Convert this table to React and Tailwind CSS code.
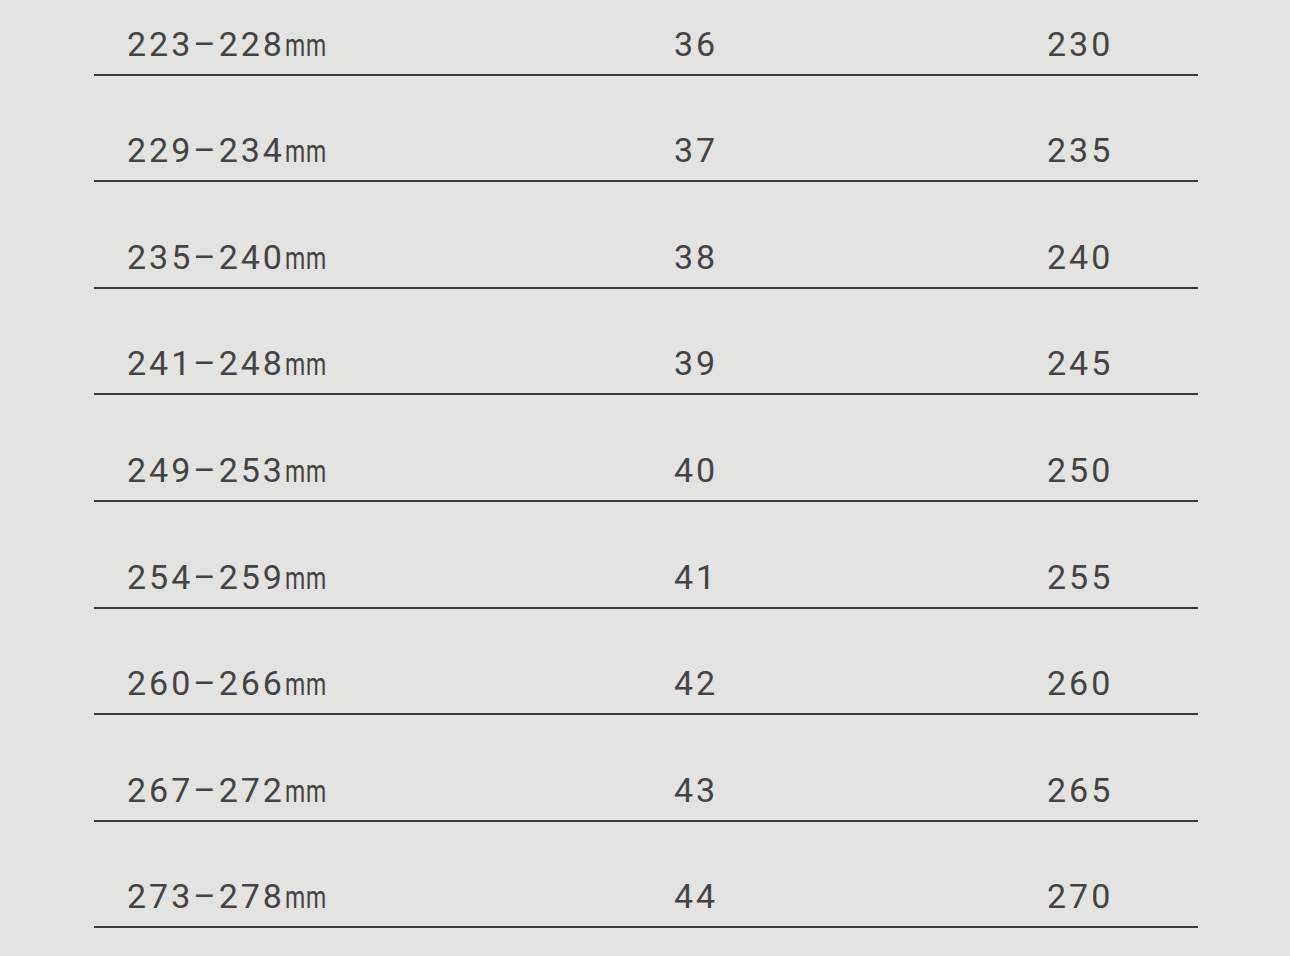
const rows = [
  ["223", "228", "36", "230"],
  ["229", "234", "37", "235"],
  ["235", "240", "38", "240"],
  ["241", "248", "39", "245"],
  ["249", "253", "40", "250"],
  ["254", "259", "41", "255"],
  ["260", "266", "42", "260"],
  ["267", "272", "43", "265"],
  ["273", "278", "44", "270"],
];

const App = () => {
  return (
    <div className="w-[1290px] h-[956px] overflow-hidden bg-[#e3e3e1] font-['Roboto',sans-serif] text-[#444444]">
      <div className="ml-[94px] w-[1104px] -mt-[31px]">
        {rows.map((r) => (
          <div
            key={r[0]}
            className="h-[106.6px] grid grid-cols-[547px_373px_1fr] items-end pl-[33px] pb-[13px] border-b-2 border-[#3b3a35]"
          >
            <span className="text-[34px] leading-none tracking-[3px] whitespace-nowrap">
              {r[0]}–{r[1]}
              {/* the unit is set narrow in the source image */}
              <span className="inline-block origin-left scale-x-[0.72] text-[32px] tracking-[1px]">
                mm
              </span>
            </span>
            <span className="text-[34px] leading-none tracking-[3px]">{r[2]}</span>
            <span className="text-[34px] leading-none tracking-[3px]">{r[3]}</span>
          </div>
        ))}
      </div>
    </div>
  );
};

export default App;
